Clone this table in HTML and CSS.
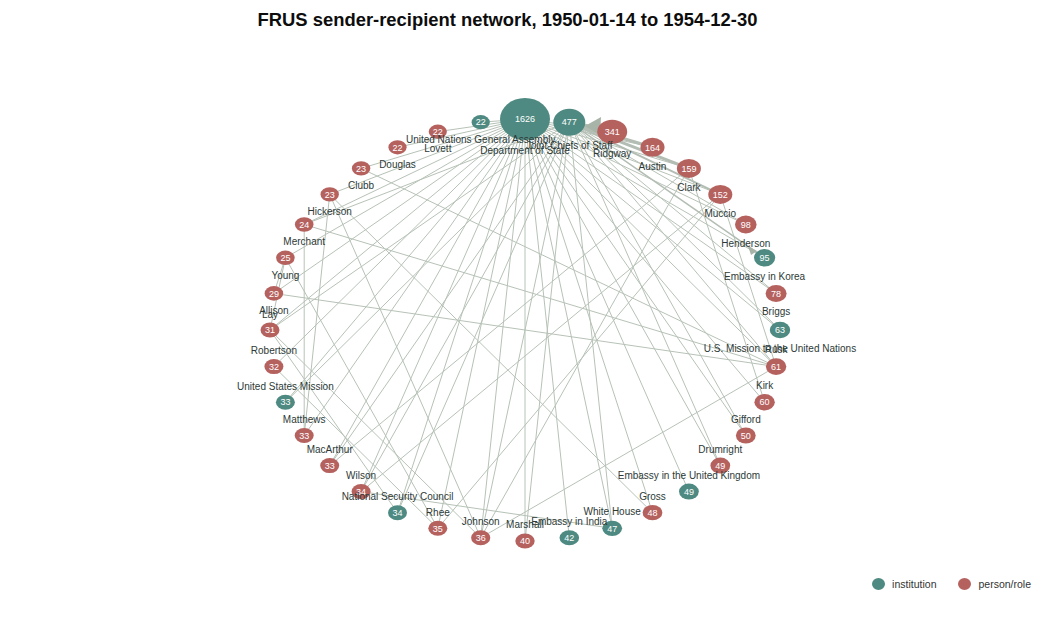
FILE: index.html
```html
<!DOCTYPE html>
<html lang="en">
<head>
<meta charset="utf-8">
<title>FRUS sender-recipient network</title>
<link rel="stylesheet" href="styles.css">
</head>
<body>
<div class="page">
  <h1 class="title">FRUS sender-recipient network, 1950-01-14 to 1954-12-30</h1>
  <svg class="graph" width="1051" height="530" viewBox="0 40 1051 530" xmlns="http://www.w3.org/2000/svg">
    <g class="edges">
      <line x1="525" y1="119" x2="612.2" y2="131.7"/>
      <line x1="525" y1="119" x2="652.5" y2="147.3"/>
      <line x1="525" y1="119" x2="688.9" y2="168.4"/>
      <line x1="525" y1="119" x2="720.3" y2="194.4"/>
      <line x1="525" y1="119" x2="745.8" y2="224.5"/>
      <line x1="525" y1="119" x2="764.6" y2="257.8"/>
      <line x1="525" y1="119" x2="776.1" y2="293.4"/>
      <line x1="525" y1="119" x2="780" y2="330"/>
      <line x1="525" y1="119" x2="776.1" y2="366.6"/>
      <line x1="525" y1="119" x2="764.6" y2="402.2"/>
      <line x1="525" y1="119" x2="745.8" y2="435.5"/>
      <line x1="525" y1="119" x2="720.3" y2="465.6"/>
      <line x1="525" y1="119" x2="688.9" y2="491.6"/>
      <line x1="525" y1="119" x2="652.5" y2="512.7"/>
      <line x1="525" y1="119" x2="612.2" y2="528.3"/>
      <line x1="525" y1="119" x2="569.3" y2="537.8"/>
      <line x1="525" y1="119" x2="525" y2="541"/>
      <line x1="525" y1="119" x2="480.7" y2="537.8"/>
      <line x1="525" y1="119" x2="437.8" y2="528.3"/>
      <line x1="525" y1="119" x2="397.5" y2="512.7"/>
      <line x1="525" y1="119" x2="361.1" y2="491.6"/>
      <line x1="525" y1="119" x2="329.7" y2="465.6"/>
      <line x1="525" y1="119" x2="304.2" y2="435.5"/>
      <line x1="525" y1="119" x2="285.4" y2="402.2"/>
      <line x1="525" y1="119" x2="273.9" y2="366.6"/>
      <line x1="525" y1="119" x2="270" y2="330"/>
      <line x1="525" y1="119" x2="273.9" y2="293.4"/>
      <line x1="525" y1="119" x2="285.4" y2="257.8"/>
      <line x1="525" y1="119" x2="304.2" y2="224.5"/>
      <line x1="525" y1="119" x2="329.7" y2="194.4"/>
      <line x1="525" y1="119" x2="361.1" y2="168.4"/>
      <line x1="525" y1="119" x2="397.5" y2="147.3"/>
      <line x1="525" y1="119" x2="437.8" y2="131.7"/>
      <line x1="525" y1="119" x2="480.7" y2="122.2"/>

      <line x1="569.3" y1="122.2" x2="745.8" y2="224.5"/>
      <line x1="569.3" y1="122.2" x2="776.1" y2="293.4"/>
      <line x1="569.3" y1="122.2" x2="780" y2="330"/>
      <line x1="569.3" y1="122.2" x2="776.1" y2="366.6"/>
      <line x1="569.3" y1="122.2" x2="745.8" y2="435.5"/>
      <line x1="569.3" y1="122.2" x2="720.3" y2="465.6"/>
      <line x1="569.3" y1="122.2" x2="612.2" y2="528.3"/>
      <line x1="569.3" y1="122.2" x2="525" y2="541"/>
      <line x1="569.3" y1="122.2" x2="480.7" y2="537.8"/>
      <line x1="569.3" y1="122.2" x2="397.5" y2="512.7"/>
      <line x1="569.3" y1="122.2" x2="361.1" y2="491.6"/>
      <line x1="569.3" y1="122.2" x2="329.7" y2="465.6"/>
      <line x1="569.3" y1="122.2" x2="285.4" y2="402.2"/>
      <line x1="569.3" y1="122.2" x2="270" y2="330"/>
      <line x1="569.3" y1="122.2" x2="304.2" y2="224.5"/>

      <line x1="329.7" y1="194.4" x2="652.5" y2="512.7"/>
      <line x1="329.7" y1="194.4" x2="480.7" y2="537.8"/>
      <line x1="329.7" y1="194.4" x2="304.2" y2="435.5"/>
      <line x1="304.2" y1="224.5" x2="304.2" y2="435.5"/>
      <line x1="304.2" y1="224.5" x2="776.1" y2="366.6"/>
      <line x1="273.9" y1="293.4" x2="776.1" y2="366.6"/>
      <line x1="361.1" y1="168.4" x2="776.1" y2="366.6"/>
      <line x1="285.4" y1="257.8" x2="270" y2="330"/>
      <line x1="285.4" y1="257.8" x2="273.9" y2="293.4"/>
      <line x1="285.4" y1="257.8" x2="437.8" y2="528.3"/>
      <line x1="270" y1="330" x2="397.5" y2="512.7"/>
      <line x1="270" y1="330" x2="480.7" y2="537.8"/>
      <line x1="273.9" y1="366.6" x2="437.8" y2="528.3"/>
      <line x1="688.9" y1="168.4" x2="480.7" y2="537.8"/>
      <line x1="720.3" y1="194.4" x2="437.8" y2="528.3"/>
      <line x1="720.3" y1="194.4" x2="776.1" y2="366.6"/>
      <line x1="688.9" y1="168.4" x2="764.6" y2="402.2"/>
      <line x1="776.1" y1="366.6" x2="480.7" y2="537.8"/>
      <line x1="329.7" y1="465.6" x2="688.9" y2="168.4"/>
      <line x1="361.1" y1="491.6" x2="720.3" y2="194.4"/>
      <line x1="361.1" y1="491.6" x2="612.2" y2="528.3"/>
    </g>
    <g class="edges heavy">
      <line class="w4" x1="569.3" y1="122.2" x2="612.2" y2="131.7"/>
      <line class="w3" x1="569.3" y1="122.2" x2="652.5" y2="147.3"/>
      <line class="w3" x1="569.3" y1="122.2" x2="688.9" y2="168.4"/>
      <line class="w2" x1="569.3" y1="122.2" x2="720.3" y2="194.4"/>
      <line class="w15" x1="569.3" y1="122.2" x2="764.6" y2="257.8"/>
      <polygon class="arrow" points="585,126 601,117 600,135"/>
      <polygon class="arrow" points="748,246 757,251 751,255"/>
    </g>

    <g class="nodes">
      <ellipse class="inst" cx="525" cy="119" rx="25" ry="21"/>
      <ellipse class="inst" cx="569.3" cy="122.2" rx="16" ry="13.5"/>
      <ellipse class="person" cx="612.2" cy="131.7" rx="15" ry="12"/>
      <ellipse class="person" cx="652.5" cy="147.3" rx="12" ry="9.5"/>
      <ellipse class="person" cx="688.9" cy="168.4" rx="12" ry="9.5"/>
      <ellipse class="person" cx="720.3" cy="194.4" rx="12" ry="9.5"/>
      <ellipse class="person" cx="745.8" cy="224.5" rx="10.8" ry="9"/>
      <ellipse class="inst" cx="764.6" cy="257.8" rx="10.6" ry="8.7"/>
      <ellipse class="person" cx="776.1" cy="293.4" rx="10.5" ry="8.5"/>
      <ellipse class="inst" cx="780" cy="330" rx="10.2" ry="8.3"/>
      <ellipse class="person" cx="776.1" cy="366.6" rx="10.2" ry="8.3"/>
      <ellipse class="person" cx="764.6" cy="402.2" rx="10.2" ry="8.2"/>
      <ellipse class="person" cx="745.8" cy="435.5" rx="9.9" ry="8"/>
      <ellipse class="person" cx="720.3" cy="465.6" rx="9.9" ry="8"/>
      <ellipse class="inst" cx="688.9" cy="491.6" rx="9.9" ry="8"/>
      <ellipse class="person" cx="652.5" cy="512.7" rx="9.9" ry="7.6"/>
      <ellipse class="inst" cx="612.2" cy="528.3" rx="9.9" ry="7.6"/>
      <ellipse class="inst" cx="569.3" cy="537.8" rx="9.8" ry="7.5"/>
      <ellipse class="person" cx="525" cy="541" rx="9.7" ry="7.5"/>
      <ellipse class="person" cx="480.7" cy="537.8" rx="9.6" ry="7.5"/>
      <ellipse class="person" cx="437.8" cy="528.3" rx="9.5" ry="7.5"/>
      <ellipse class="inst" cx="397.5" cy="512.7" rx="9.5" ry="7.5"/>
      <ellipse class="person" cx="361.1" cy="491.6" rx="9.5" ry="7.5"/>
      <ellipse class="person" cx="329.7" cy="465.6" rx="9.5" ry="7.5"/>
      <ellipse class="person" cx="304.2" cy="435.5" rx="9.5" ry="7.5"/>
      <ellipse class="inst" cx="285.4" cy="402.2" rx="9.5" ry="7.5"/>
      <ellipse class="person" cx="273.9" cy="366.6" rx="9.5" ry="7.5"/>
      <ellipse class="person" cx="270" cy="330" rx="9.5" ry="7.5"/>
      <ellipse class="person" cx="273.9" cy="293.4" rx="9.3" ry="7.3"/>
      <ellipse class="person" cx="285.4" cy="257.8" rx="9.3" ry="7.3"/>
      <ellipse class="person" cx="304.2" cy="224.5" rx="9.3" ry="7.3"/>
      <ellipse class="person" cx="329.7" cy="194.4" rx="9.2" ry="7.2"/>
      <ellipse class="person" cx="361.1" cy="168.4" rx="9.2" ry="7.2"/>
      <ellipse class="person" cx="397.5" cy="147.3" rx="9.1" ry="7.1"/>
      <ellipse class="person" cx="437.8" cy="131.7" rx="9.1" ry="7.1"/>
      <ellipse class="inst" cx="480.7" cy="122.2" rx="9.1" ry="7.1"/>
    </g>

    <g class="counts">
      <text x="525" y="122.3">1626</text>
      <text x="569.3" y="125.4">477</text>
      <text x="612.2" y="134.9">341</text>
      <text x="652.5" y="150.5">164</text>
      <text x="688.9" y="171.6">159</text>
      <text x="720.3" y="197.6">152</text>
      <text x="745.8" y="227.7">98</text>
      <text x="764.6" y="261">95</text>
      <text x="776.1" y="296.6">78</text>
      <text x="780" y="333.2">63</text>
      <text x="776.1" y="369.8">61</text>
      <text x="764.6" y="405.4">60</text>
      <text x="745.8" y="438.7">50</text>
      <text x="720.3" y="468.8">49</text>
      <text x="688.9" y="494.8">49</text>
      <text x="652.5" y="515.9">48</text>
      <text x="612.2" y="531.5">47</text>
      <text x="569.3" y="541">42</text>
      <text x="525" y="544.2">40</text>
      <text x="480.7" y="541">36</text>
      <text x="437.8" y="531.5">35</text>
      <text x="397.5" y="515.9">34</text>
      <text x="361.1" y="494.8">34</text>
      <text x="329.7" y="468.8">33</text>
      <text x="304.2" y="438.7">33</text>
      <text x="285.4" y="405.4">33</text>
      <text x="273.9" y="369.8">32</text>
      <text x="270" y="333.2">31</text>
      <text x="273.9" y="296.6">29</text>
      <text x="285.4" y="261">25</text>
      <text x="304.2" y="227.7">24</text>
      <text x="329.7" y="197.6">23</text>
      <text x="361.1" y="171.6">23</text>
      <text x="397.5" y="150.5">22</text>
      <text x="437.8" y="134.9">22</text>
      <text x="480.7" y="125.4">22</text>
    </g>

    <g class="labels">
      <text x="525" y="153.5">Department of State</text>
      <text x="569.3" y="149.2">Joint Chiefs of Staff</text>
      <text x="612.2" y="157.2">Ridgway</text>
      <text x="652.5" y="170.3">Austin</text>
      <text x="688.9" y="191.4">Clark</text>
      <text x="720.3" y="217.4">Muccio</text>
      <text x="745.8" y="247">Henderson</text>
      <text x="764.6" y="280">Embassy in Korea</text>
      <text x="776.1" y="315.4">Briggs</text>
      <text x="780" y="351.8">U.S. Mission to the United Nations</text>
      <text x="776.1" y="353.3">Rusk</text>
      <text x="764.6" y="389">Kirk</text>
      <text x="745.8" y="422.5">Gifford</text>
      <text x="720.3" y="452.6">Drumright</text>
      <text x="688.9" y="478.6">Embassy in the United Kingdom</text>
      <text x="652.5" y="499.7">Gross</text>
      <text x="612.2" y="515.3">White House</text>
      <text x="569.3" y="525">Embassy in India</text>
      <text x="525" y="528.3">Marshall</text>
      <text x="480.7" y="525.2">Johnson</text>
      <text x="437.8" y="515.8">Rhee</text>
      <text x="397.5" y="500.2">National Security Council</text>
      <text x="361.1" y="479.1">Wilson</text>
      <text x="329.7" y="453.1">MacArthur</text>
      <text x="304.2" y="423">Matthews</text>
      <text x="285.4" y="389.7">United States Mission</text>
      <text x="273.9" y="354.1">Robertson</text>
      <text x="270" y="317.5">Lay</text>
      <text x="273.9" y="314.2">Allison</text>
      <text x="285.4" y="278.6">Young</text>
      <text x="304.2" y="245.3">Merchant</text>
      <text x="329.7" y="215.1">Hickerson</text>
      <text x="361.1" y="189.1">Clubb</text>
      <text x="397.5" y="167.9">Douglas</text>
      <text x="437.8" y="152.3">Lovett</text>
      <text x="480.7" y="142.8">United Nations General Assembly</text>
    </g>
  </svg>
  <div class="legend">
    <div class="legend-item"><span class="swatch swatch-inst"></span><span>institution</span></div>
    <div class="legend-item"><span class="swatch swatch-person"></span><span>person/role</span></div>
  </div>
</div>
</body>
</html>
```

FILE: styles.css
```css
html, body {
  margin: 0;
  padding: 0;
  background: #ffffff;
}

body {
  font-family: "Liberation Sans", Arial, Helvetica, sans-serif;
  color: #222;
}

.page {
  width: 1051px;
  height: 620px;
  display: flex;
  flex-direction: column;
}

.title {
  margin: 0;
  height: 40px;
  box-sizing: border-box;
  padding-top: 9px;
  padding-right: 36px;
  font-size: 18.4px;
  line-height: 22px;
  font-weight: bold;
  text-align: center;
  color: #0d0d0d;
}

.graph {
  display: block;
}

.edges line {
  stroke: #b7c2b7;
  stroke-width: 1;
  fill: none;
}

.heavy line {
  stroke: #b3bdb3;
}

.heavy .w4 { stroke-width: 4; }
.heavy .w3 { stroke-width: 3; }
.heavy .w2 { stroke-width: 2; }
.heavy .w15 { stroke-width: 1.5; }

.arrow {
  fill: #a9b4a9;
}

.inst {
  fill: #4e8a81;
}

.person {
  fill: #b5625f;
}

.counts text {
  fill: #ffffff;
  font-size: 9px;
  text-anchor: middle;
}

.labels text {
  fill: #2d3a37;
  font-size: 10px;
  text-anchor: middle;
}

.legend {
  display: flex;
  justify-content: flex-end;
  align-items: center;
  gap: 22px;
  height: 28px;
  padding-right: 20px;
}

.legend-item {
  display: flex;
  align-items: center;
  gap: 7px;
  font-size: 10.5px;
  color: #333;
}

.swatch {
  width: 13px;
  height: 12px;
  border-radius: 50%;
}

.swatch-inst {
  background: #4e8a81;
}

.swatch-person {
  background: #b5625f;
}
```
